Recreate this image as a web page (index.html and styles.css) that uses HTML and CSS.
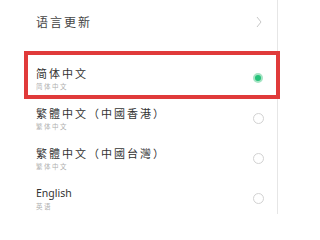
FILE: index.html
```html
<!DOCTYPE html>
<html lang="zh">
<head>
<meta charset="utf-8">
<link rel="stylesheet" href="styles.css">
</head>
<body>
<div class="panel">
  <div class="header">
    <span class="header-title">语言更新</span>
    <svg class="chevron" width="6" height="12" viewBox="0 0 6 12"><polyline points="1,1 5,6 1,11" fill="none" stroke="#c8c8c8" stroke-width="1"/></svg>
  </div>
  <ul class="list">
    <li class="item selected">
      <div class="texts"><span class="title">简体中文</span><span class="sub">简体中文</span></div>
      <span class="radio on"></span>
    </li>
    <li class="item">
      <div class="texts"><span class="title">繁體中文（中國香港）</span><span class="sub">繁体中文</span></div>
      <span class="radio"></span>
    </li>
    <li class="item">
      <div class="texts"><span class="title">繁體中文（中國台灣）</span><span class="sub">繁体中文</span></div>
      <span class="radio"></span>
    </li>
    <li class="item">
      <div class="texts"><span class="title en">English</span><span class="sub">英语</span></div>
      <span class="radio"></span>
    </li>
  </ul>
</div>
</body>
</html>
```
FILE: styles.css
```css
html, body {
  margin: 0;
  padding: 0;
  background: #fff;
  overflow: hidden;
}
body {
  font-family: "Noto Sans CJK SC", "Noto Sans", sans-serif;
  width: 285px;
  height: 214px;
}
.panel {
  width: 277px;
  height: 214px;
  border-right: 1px solid #e6e6e6;
}
.header {
  height: 44px;
  display: flex;
  align-items: center;
  justify-content: space-between;
  padding: 0 15px 0 36px;
}
.header-title {
  font-size: 12px;
  letter-spacing: 2px;
  color: #444;
  line-height: 1;
}
.chevron {
  display: block;
}
.list {
  list-style: none;
  margin: 14px 0 0;
  padding: 0;
}
.item {
  position: relative;
  height: 40px;
  display: flex;
  align-items: center;
  justify-content: space-between;
  padding: 0 13px 0 36px;
}
.item.selected::after {
  content: "";
  position: absolute;
  left: 24px;
  right: -3px;
  top: -7px;
  bottom: -1px;
  border: 4px solid #e03a3a;
}
.texts {
  display: flex;
  flex-direction: column;
}
.title {
  font-size: 11px;
  line-height: 12px;
  letter-spacing: 2px;
  color: #333;
}
.title.en {
  font-family: "Noto Sans", sans-serif;
  font-size: 10.5px;
  letter-spacing: 0;
  color: #333;
}
.sub {
  margin-top: 3px;
  font-size: 6.5px;
  line-height: 8px;
  letter-spacing: 1.5px;
  color: #b0b0b0;
}
.radio {
  width: 11px;
  height: 11px;
  box-sizing: border-box;
  border: 1px solid #d2d2d2;
  border-radius: 50%;
}
.radio.on {
  width: 10px;
  height: 10px;
  border: 2px solid #a6e4c4;
  background: #25c27a;
  margin-right: 1px;
}
```
